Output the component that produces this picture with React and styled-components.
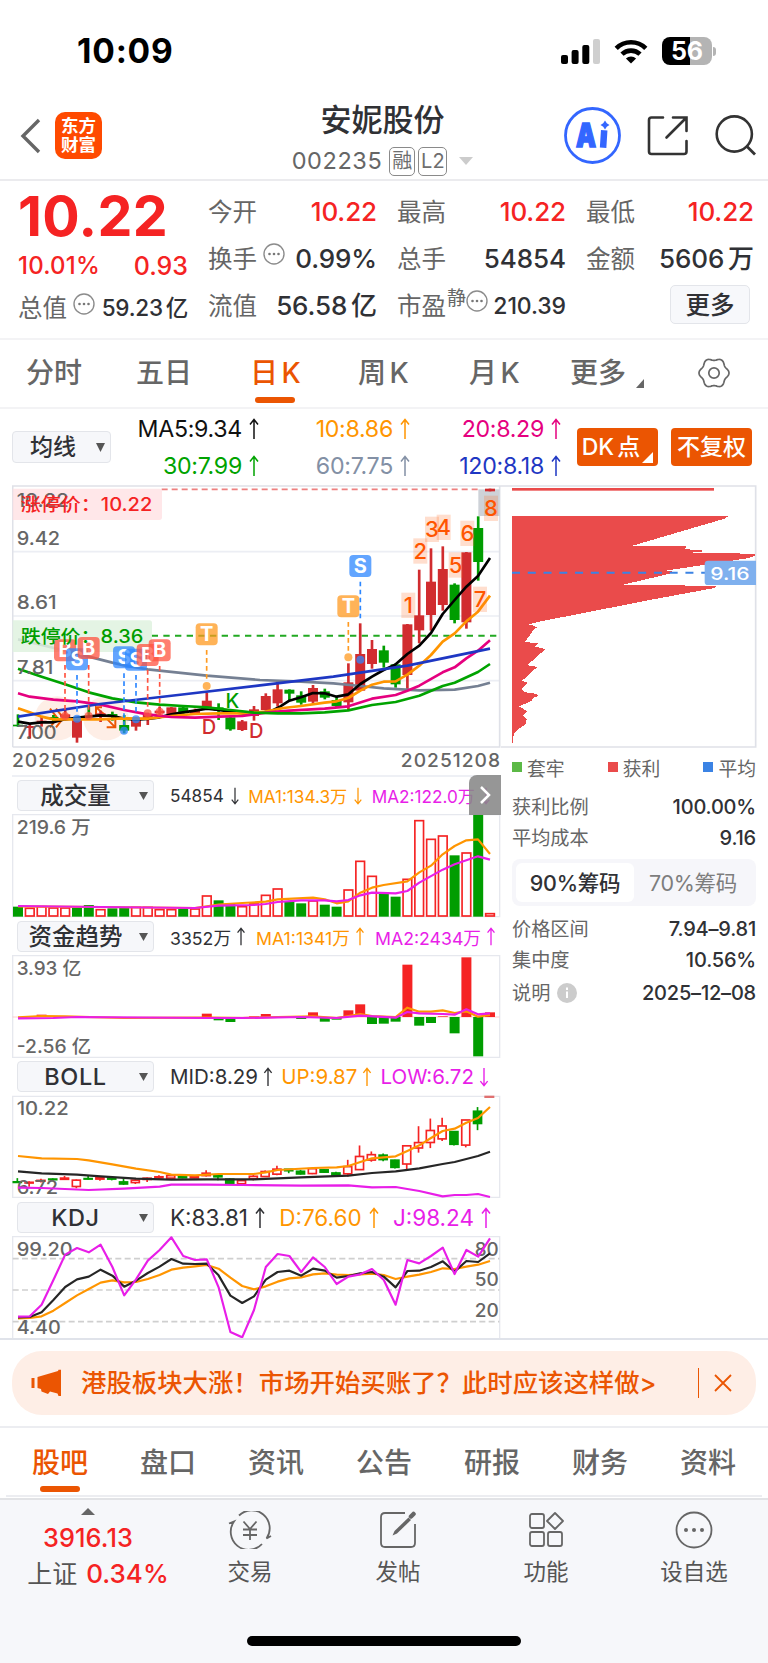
import styled, { createGlobalStyle } from "styled-components";

const GlobalStyle = createGlobalStyle`
  * {
    box-sizing: border-box;
  }

  body {
    margin: 0;
    background-color: white;
    font-family: Inter, "Noto Sans CJK SC", sans-serif;
    color: #303135;
  }

  svg {
    display: block;
    flex-shrink: 0;
  }
`;

const RED = "#f52323";
const GREEN = "#009d00";
const ORANGE = "#eb5502";
const AMBER = "#ff9500";
const PURPLE = "#e81ee8";
const GRAY = "#666";

const Page = styled.div`
  width: 768px;
  height: 1663px;
  overflow: hidden;
  display: flex;
  flex-direction: column;
  white-space: nowrap;
`;

const Text = styled.span`
  font-size: ${(p) => p.$size}px;
  line-height: ${(p) => p.$line || 30}px;
  font-weight: ${(p) => p.$weight || 400};
  letter-spacing: ${(p) => p.$space || 0}px;
  word-spacing: -3px;
  color: ${(p) => p.$color || "#303135"};
`;

/* ---------- status bar and header ---------- */

const StatusBar = styled.div`
  height: 92px;
  padding: 10px 52px 0 77px;
  display: flex;
  align-items: center;
  justify-content: space-between;
  flex-shrink: 0;
`;

const StatusIcons = styled.div`
  display: flex;
  align-items: center;
  gap: 14px;
`;

const BatteryWrap = styled.div`
  display: flex;
  align-items: center;
  gap: 1px;
`;

const Battery = styled.div`
  width: 50px;
  height: 28px;
  border-radius: 8px;
  background: linear-gradient(to right, black 56%, #b4b4b4 56%);
  color: white;
  font-size: 25px;
  line-height: 28px;
  font-weight: 700;
  text-align: center;
`;

const BatteryTip = styled.div`
  width: 3px;
  height: 9px;
  border-radius: 0 3px 3px 0;
  background-color: #b4b4b4;
`;

const Header = styled.header`
  height: 89px;
  display: grid;
  grid-template-columns: 1fr auto 1fr;
  border-bottom: 2px solid #ebebee;
  flex-shrink: 0;
`;

const HeaderLeft = styled.div`
  display: flex;
  align-items: center;
  gap: 14px;
  padding-left: 20px;
`;

const Logo = styled.div`
  width: 47px;
  height: 47px;
  border-radius: 10px;
  background-color: #ff4a00;
  color: white;
  font-size: 17.5px;
  line-height: 19px;
  font-weight: 700;
  padding-top: 4px;
  text-align: center;
`;

const TitleBlock = styled.div`
  display: flex;
  flex-direction: column;
  align-items: center;
  padding: 9px 3px 0 0;
`;

const CodeRow = styled.div`
  display: flex;
  align-items: center;
  height: 30px;
  margin-top: 7px;
`;

const CodeTag = styled.span`
  width: ${(p) => p.$width}px;
  height: 29px;
  border: 1.5px solid #8a8a8a;
  border-radius: 5px;
  color: #6e6e6e;
  font-size: 20px;
  line-height: 27px;
  text-align: center;
  margin-left: ${(p) => p.$gap}px;
`;

const HeaderRight = styled.div`
  display: flex;
  align-items: center;
  justify-content: flex-end;
  padding-right: 10px;
`;

/* ---------- quote numbers ---------- */

const Quote = styled.section`
  height: 159px;
  padding: 7px 14px 0 18px;
  display: grid;
  grid-template-columns: 170px 169px 169px 168px;
  column-gap: 20px;
  border-bottom: 2px solid #f3f3f5;
  flex-shrink: 0;
`;

const QuoteColumn = styled.div`
  display: flex;
  flex-direction: column;
`;

const QuoteRow = styled.div`
  height: ${(p) => p.$height || 47}px;
  display: flex;
  align-items: center;
  justify-content: space-between;
`;

const LabelGroup = styled.div`
  display: flex;
  align-items: center;
  gap: ${(p) => p.$gap || 6}px;
`;

const Raised = styled.div`
  display: flex;
  margin-top: -9px;
`;

const MoreButton = styled.button`
  width: 80px;
  height: 39px;
  margin: 3px 4px 0 auto;
  border: 1.5px solid #e3e5ea;
  border-radius: 5px;
  background-color: #f7f8fb;
  color: #303135;
  font: 500 24.5px/34px Inter, "Noto Sans CJK SC", sans-serif;
  padding: 0;
`;

/* ---------- period tabs ---------- */

const PeriodTabs = styled.nav`
  height: 69px;
  padding-left: 26px;
  display: flex;
  border-bottom: 2px solid #f3f3f5;
  flex-shrink: 0;
`;

const PeriodTab = styled.div`
  width: ${(p) => p.$width}px;
  padding-top: 13px;
  font-size: 28px;
  line-height: 40px;
  font-weight: 500;
  color: ${(p) => (p.$active ? ORANGE : GRAY)};
  word-spacing: -4px;
`;

const Underline = styled.div`
  width: 40px;
  height: 6px;
  margin: ${(p) => p.$margin};
  border-radius: 3px;
  background-color: ${ORANGE};
`;

const MoreTab = styled.div`
  display: flex;
  align-items: flex-end;
  gap: 10px;

  svg {
    margin-bottom: 5px;
  }
`;

const GearBox = styled.div`
  padding: 17px 0 0 19px;
`;

/* ---------- moving averages ---------- */

const AverageBar = styled.section`
  height: 76px;
  padding-left: 12px;
  display: flex;
  align-items: center;
  flex-shrink: 0;
`;

const SelectBox = styled.div`
  width: ${(p) => p.$width}px;
  height: ${(p) => p.$height || 31}px;
  flex-shrink: 0;
  display: flex;
  align-items: center;
  border: 1.5px solid #e3e5ea;
  border-radius: 4px;
  background-color: #f6f7fa;
  padding-right: 5px;
`;

const SelectName = styled.span`
  flex: 1;
  text-align: center;
  padding-right: ${(p) => p.$shift || 0}px;
  font-size: ${(p) => p.$size || 23}px;
  line-height: 28px;
  font-weight: 500;
  letter-spacing: ${(p) => p.$space || 0}px;
`;

const AverageGrid = styled.div`
  display: grid;
  grid-template-columns: 148px 151px 151px;
  grid-auto-rows: 37px;
  margin: 0 16px 0 0;
`;

const Average = styled.div`
  display: flex;
  align-items: center;
  justify-content: flex-end;
  gap: 7px;
  font-size: 23.2px;
  letter-spacing: -0.3px;
  color: ${(p) => p.$color};
`;

const OrangeButton = styled.div`
  width: 81px;
  height: 38px;
  margin-right: 13px;
  flex-shrink: 0;
  border-radius: 4px;
  background-color: ${ORANGE};
  color: white;
  font-size: 23px;
  font-weight: 500;
  line-height: 38px;
  word-spacing: -3px;
  display: flex;
  justify-content: center;
  gap: 2px;
`;

/* ---------- charts ---------- */

const Body = styled.main`
  height: 855px;
  padding-left: 12px;
  display: flex;
  border-bottom: 2px solid #e0e3ea;
  flex-shrink: 0;
`;

const ChartColumn = styled.div`
  width: 489px;
  flex-shrink: 0;
`;

const Dates = styled.div`
  height: 29px;
  display: flex;
  justify-content: space-between;
  border-bottom: 2px solid #eef0f5;
`;

const IndicatorBar = styled.div`
  position: relative;
  height: 37px;
  padding-left: 5px;
  display: flex;
  align-items: center;
`;

const Readings = styled.div`
  display: flex;
  flex: 1;
  justify-content: space-between;
  margin: 0 ${(p) => p.$right}px 0 16px;
`;

const Reading = styled.div`
  display: flex;
  align-items: center;
  gap: ${(p) => p.$gap}px;
  font-size: ${(p) => p.$size}px;
  color: ${(p) => p.$color};
`;

const NextTile = styled.div`
  position: absolute;
  right: 0;
  top: -2px;
  width: 32px;
  height: 40px;
  border-radius: 8px 0 0 0;
  background-color: rgba(135, 135, 135, 0.88);
  display: flex;
  align-items: center;
  justify-content: center;
`;

const SideColumn = styled.aside`
  width: 256px;
`;

const SideContent = styled.div`
  padding: 4px 1px 0 11px;
`;

const Legend = styled.div`
  height: 30px;
  display: flex;
  align-items: center;
  justify-content: space-between;
`;

const LegendItem = styled.div`
  display: flex;
  align-items: center;
  gap: 5px;
  font-size: 18.8px;
  color: ${GRAY};

  &::before {
    content: "";
    width: 10px;
    height: 10px;
    background-color: ${(p) => p.$color};
  }
`;

const SideRow = styled.div`
  height: ${(p) => p.$height}px;
  display: flex;
  align-items: center;
  justify-content: space-between;
`;

const Segment = styled.div`
  height: 47px;
  margin: 14px 0 7px;
  padding: 4px;
  display: flex;
  border-radius: 8px;
  background-color: #f6f6fa;
`;

const SegmentItem = styled.div`
  flex: 1;
  border-radius: 6px;
  background-color: ${(p) => (p.$active ? "white" : "transparent")};
  color: ${(p) => (p.$active ? "#303135" : "#7d7d7d")};
  font-size: 21.5px;
  letter-spacing: -0.3px;
  font-weight: ${(p) => (p.$active ? 500 : 400)};
  line-height: 40px;
  text-align: center;
`;

/* ---------- bottom ---------- */

const Banner = styled.div`
  height: 64px;
  margin: 11px 12px 11px;
  padding: 0 24px 0 19px;
  display: flex;
  align-items: center;
  border-radius: 30px;
  background-color: #feeee6;
  flex-shrink: 0;
`;

const BannerText = styled.div`
  flex: 1;
  margin-left: 18px;
  font-size: 25.4px;
  line-height: 40px;
  font-weight: 500;
  color: ${ORANGE};
`;

const BannerDivider = styled.div`
  width: 1.5px;
  height: 30px;
  margin-right: 15px;
  background-color: ${ORANGE};
`;

const SectionTabs = styled.nav`
  height: 69px;
  margin: 0 6px;
  display: flex;
  border-bottom: 2px solid #ecedf1;
  flex-shrink: 0;
`;

const SectionWrap = styled.div`
  border-top: 2px solid #ecedf1;
  flex-shrink: 0;
`;

const SectionTab = styled.div`
  width: 108px;
  padding-top: 15px;
  text-align: center;
  font-size: 28px;
  line-height: 40px;
  font-weight: 500;
  color: ${(p) => (p.$active ? ORANGE : GRAY)};
`;

const BottomBar = styled.footer`
  flex: 1;
  display: flex;
  flex-direction: column;
  justify-content: space-between;
  align-items: center;
  margin-top: 1px;
  border-top: 2px solid #e2e3e6;
  background-color: #f6f7fa;
`;

const BottomItems = styled.div`
  display: flex;
`;

const IndexItem = styled.div`
  width: 176px;
  padding-top: 8px;
  display: flex;
  flex-direction: column;
  align-items: center;
`;

const IndexChange = styled.div`
  display: flex;
  align-items: center;
  gap: 9px;
  padding-left: 20px;
`;

const BottomItem = styled.div`
  width: 148px;
  padding-top: 11px;
  display: flex;
  flex-direction: column;
  align-items: center;
  gap: 8px;
  font-size: 22.5px;
  line-height: 30px;
  color: #555;
`;

const HomeIndicator = styled.div`
  width: 274px;
  height: 10px;
  margin-bottom: 17px;
  border-radius: 5px;
  background-color: black;
`;

/* ---------- icons ---------- */

const Arrow = ({ down, size = 22 }) => (
  <svg width="10" height={size} viewBox="0 0 10 22" fill="none" stroke="currentColor" strokeWidth="1.5">
    <path d={down ? "M5 1V20.5M1 15.5L5 20.5L9 15.5" : "M5 21V1.5M1 6.5L5 1.5L9 6.5"} />
  </svg>
);

const Caret = ({ width = 9, height = 8, color = "#555", up }) => (
  <svg width={width} height={height} viewBox="0 0 10 10" preserveAspectRatio="none">
    <path d={up ? "M0 10L5 0L10 10Z" : "M0 0H10L5 10Z"} fill={color} />
  </svg>
);

const Corner = ({ color }) => (
  <svg width="8" height="9" viewBox="0 0 10 10" preserveAspectRatio="none">
    <path d="M10 0V10H0Z" fill={color} />
  </svg>
);

const Dots = () => (
  <svg width="22" height="22" viewBox="0 0 22 22">
    <circle cx="11" cy="11" r="10" fill="none" stroke="#8c8c8c" strokeWidth="1.4" />
    {[6.5, 11, 15.5].map((x) => (
      <circle key={x} cx={x} cy="11" r="1.3" fill="#777" />
    ))}
  </svg>
);

const gearPath =
  Array.from({ length: 121 }, (_, i) => {
    const a = (i / 120) * Math.PI * 2;
    const r = 13.8 + 1.2 * Math.cos(6 * a);
    return `${i ? "L" : "M"}${(16 + r * Math.cos(a)).toFixed(2)} ${(16 + r * Math.sin(a)).toFixed(2)}`;
  }).join("") + "Z";

const Gear = () => (
  <svg width="32" height="32" viewBox="0 0 32 32" fill="none" stroke="#666" strokeWidth="1.7" strokeLinejoin="round">
    <path d={gearPath} />
    <circle cx="16" cy="16" r="5.2" />
  </svg>
);

/* ---------- chart data ---------- */

// [rising, high, open/close top, open/close bottom, low]
const CANDLES = [
  [0, 703, 734, 739, 740], [1, 730, 738, 744, 776], [1, 708, 722, 728, 740], [0, 705, 711, 716, 724],
  [1, 685, 703, 713, 718], [1, 714, 720, 773, 788], [0, 680, 707, 711, 714], [1, 692, 700, 711, 726],
  [0, 695, 702, 711, 722], [0, 705, 735, 752, 760], [1, 712, 720, 740, 752], [1, 698, 704, 714, 735],
  [1, 680, 692, 700, 710], [1, 681, 682, 703, 704], [0, 675, 682, 700, 704], [1, 686, 690, 701, 704],
  [1, 638, 662, 682, 690], [0, 670, 682, 692, 720], [0, 706, 712, 748, 752], [1, 720, 724, 750, 753],
  [1, 678, 688, 708, 722], [1, 640, 648, 690, 691], [1, 600, 628, 670, 680], [0, 628, 629, 641, 662],
  [0, 634, 646, 668, 674], [1, 615, 624, 665, 670], [0, 626, 634, 653, 658], [0, 650, 660, 678, 682],
  [1, 550, 607, 667, 690], [1, 430, 522, 632, 633], [1, 480, 507, 552, 566], [0, 497, 511, 548, 563],
  [0, 550, 553, 613, 623], [1, 432, 433, 585, 628], [1, 269, 406, 451, 490], [1, 205, 305, 405, 452],
  [1, 199, 267, 375, 392], [0, 310, 314, 420, 430], [1, 216, 217, 427, 446], [0, 109, 144, 246, 302],
  [1, 26, 26, 34, 34],
];

const VOLUMES = [
  410, 413, 408, 412, 412, 413, 405, 417, 415, 413, 410, 410, 417, 417, 413, 415, 376, 391, 400, 408, 400,
  374, 355, 394, 400, 391, 404, 410, 358, 272, 317, 370, 380, 326, 150, 206, 196, 256, 247, 135, 429,
];
const FALLING_VOLUMES = [0, 5, 6, 8, 9, 14, 17, 18, 23, 24, 26, 27, 31, 32, 37, 39];

// height above the zero line, keyed by day
const FLOWS = {
  2: 7, 16: 10, 17: -10, 18: -15, 20: 2, 21: 9, 24: -6, 25: 14, 26: -14, 27: -8, 28: 20, 29: 38, 30: -21,
  31: -20, 32: -14, 33: 157, 34: -26, 35: -18, 36: 2, 37: -49, 38: 179, 39: -118, 40: 14,
};

const dayX = (i) => 54 + i * 35.4;
const daily = (values) => values.map((y, i) => `${dayX(i)},${y}`).join(" ");

const MA_LINES = [
  ["#758093", "54,478 125,495 195,512 266,530 337,548 372,556 443,568 620,587 780,600 903,605 1000,610 1081,618 1151,625 1258,631 1364,629 1434,618 1470,608"],
  ["#000", "54,725 89,731 125,727 160,727 195,718 240,712 302,706 337,708 372,716 408,719 443,717 479,712 514,703 549,697 585,692 620,686 656,690 691,695 727,700 762,700 810,695 840,680 868,662 903,652 939,639 974,640 1010,650 1045,643 1081,612 1116,590 1151,570 1187,553 1222,522 1258,497 1293,459 1328,402 1364,360 1399,320 1434,288 1470,234"],
  [AMBER, "54,685 89,697 125,710 160,718 230,718 300,718 372,715 443,716 514,708 585,702 656,700 727,700 797,695 850,684 903,678 974,668 1010,664 1045,654 1081,632 1116,614 1151,605 1187,604 1222,584 1258,557 1293,525 1328,485 1364,460 1399,424 1434,395 1470,347"],
  ["#e5007f", "54,640 89,650 160,659 231,664 302,674 372,690 443,703 514,711 585,713 656,710 727,708 797,698 868,692 974,686 1045,679 1116,656 1187,645 1222,632 1258,617 1328,577 1364,562 1399,535 1434,512 1470,481"],
  ["#00a300", "54,566 125,590 195,613 266,637 337,655 408,667 479,674 549,678 620,682 691,690 762,698 833,700 903,700 974,697 1045,691 1116,675 1187,666 1258,647 1328,618 1364,608 1434,576 1470,552"],
  ["#1e37c3", "54,710 300,672 560,642 780,616 1000,590 1222,557 1470,506"],
];

// [letter, x, badge y, dashed line start, dashed line end, dot y, colour]
const BADGES = [
  ["B", 195, 511, 555, 690, 708, "#ff5340"],
  ["S", 231, 538, 585, 700, 716, "#2d87ff"],
  ["B", 266, 504, 555, 690, 708, "#ff5340"],
  ["S", 372, 532, 580, 735, 752, "#2d87ff"],
  ["S", 408, 539, 585, 700, 718, "#2d87ff"],
  ["B", 443, 525, 570, 685, 700, "#ff5340"],
  ["B", 479, 511, 558, 680, 695, "#ff5340"],
  ["T", 620, 463, 510, 605, 618, "#ff9a20"],
  ["T", 1045, 379, 426, 520, 532, "#ff9a20"],
  ["S", 1081, 258, 305, 415, 539, "#2d87ff"],
];

const COUNTS = [
  [1, 1225, 376], [2, 1261, 213], [3, 1296, 148], [4, 1331, 142],
  [5, 1367, 255], [6, 1402, 160], [7, 1440, 358], [8, 1473, 85],
];

const CHIP_EDGE = [
  [109, 686], [117, 672], [198, 396], [200, 558], [206, 556], [207, 535], [211, 606], [217, 604], [218, 580],
  [222, 766], [229, 764], [236, 738], [272, 500], [277, 528], [315, 368], [318, 648], [324, 646], [360, 452],
  [427, 110], [434, 88], [437, 100], [444, 114], [447, 102], [487, 75], [490, 116], [500, 106], [508, 136],
  [556, 82], [561, 112], [603, 66], [608, 82], [615, 78], [627, 64], [637, 74], [642, 108], [648, 116],
  [655, 98], [662, 95], [680, 58], [690, 75], [696, 82], [706, 68], [718, 80], [735, 76], [745, 58], [760, 42],
  [792, 37],
];

const chipWidth = (y) => {
  const n = CHIP_EDGE.findIndex((p) => p[0] > y);
  if (n < 1) return 1;
  const [y0, x0] = CHIP_EDGE[n - 1];
  const [y1, x1] = CHIP_EDGE[n];
  return x0 + ((x1 - x0) * (y - y0)) / (y1 - y0) - 36;
};

/* ---------- charts ---------- */

const Label = ({ x, y, w, children, size = 55, color = "#666", weight = 500 }) => (
  <text x={x} y={y} textLength={w} lengthAdjust="spacingAndGlyphs" fontSize={size} fontWeight={weight} fill={color}>
    {children}
  </text>
);

const PriceChart = () => (
  <svg width="489" height="263" viewBox="36 15 1467 789">
    <g stroke="#eceef4" strokeWidth="5">
      <path d="M38 215H1498M38 408H1498M38 602H1498" />
    </g>
    <path d="M38 801V18H1503M1499 18V801H38" fill="none" stroke="#dfe1e8" strokeWidth="5" />
    <rect x="1435" y="28" width="64" height="80" fill="#ced2d8" />
    <g fill="#feeae0" fillOpacity="0.8">
      <ellipse cx="172" cy="715" rx="68" ry="66" />
      <ellipse cx="318" cy="715" rx="68" ry="66" />
    </g>
    <g fill="none" stroke={ORANGE} strokeWidth="6">
      <path d="M150 686L172 714L150 742M168 686L190 714L168 742" />
      <path d="M288 706V682L316 706M288 682H306M320 742H346V718M346 742L320 716" />
    </g>
    <path d="M485 28H1435" stroke="#ee8080" strokeWidth="5" strokeDasharray="18 12" />
    <path d="M455 467H1498" stroke="#22a922" strokeWidth="6" strokeDasharray="19 16" />
    {CANDLES.map(([up, high, top, bottom, low], i) => (
      <g key={i} fill={up ? "#d12c2f" : GREEN}>
        <rect x={dayX(i) - 4} y={high} width="8" height={low - high} />
        <rect x={dayX(i) - 15} y={top} width="30" height={bottom - top} />
      </g>
    ))}
    {MA_LINES.map(([color, points]) => (
      <polyline key={color} points={points} fill="none" stroke={color} strokeWidth="8" strokeLinejoin="round" />
    ))}
    <path d="M38 26H478Q486 26 486 34V112Q486 120 478 120H38Z" fill="#ffdfe1" fillOpacity="0.75" />
    <path d="M38 421H448Q456 421 456 429V508Q456 516 448 516H38Z" fill="#dff2df" fillOpacity="0.85" />
    {BADGES.map(([letter, x, y, from, to, dot, color]) => (
      <g key={x}>
        <path d={`M${x} ${from}V${to}`} stroke={color} strokeWidth="5" strokeDasharray="14 10" />
        <circle cx={x} cy={dot} r="12" fill={color} fillOpacity="0.75" />
        <rect x={x - 33} y={y - 33} width="66" height="66" rx="12" fill={color} fillOpacity="0.75" />
        <text x={x} y={y + 21} textAnchor="middle" fontSize="60" fontWeight="700" fill="white">{letter}</text>
      </g>
    ))}
    <Label x="50" y="82" w="156">10.22</Label>
    <Label x="50" y="194" w="130">9.42</Label>
    <Label x="50" y="388" w="120">8.61</Label>
    <Label x="50" y="583" w="110">7.81</Label>
    <Label x="50" y="778" w="120">7.00</Label>
    <Label x="62" y="94" w="395" color={RED}>涨停价：10.22</Label>
    <Label x="62" y="488" w="368" color={GREEN}>跌停价：8.36</Label>
    {COUNTS.map(([n, x, y]) => (
      <g key={n}>
        <rect x={x - 21} y={y - 38} width="42" height="76" fill="#ff6a20" fillOpacity="0.22" />
        <text x={x} y={y + 23} textAnchor="middle" fontSize="66" fontWeight="500" fill="#ff5500">{n}</text>
      </g>
    ))}
    <g fontSize="60" fontWeight="500" textAnchor="middle">
      <text x="697" y="685" fill={GREEN}>K</text>
      <text x="627" y="762" fill="#d12c2f">D</text>
      <text x="769" y="773" fill="#d12c2f">D</text>
    </g>
  </svg>
);

const VolumeChart = () => (
  <svg width="489" height="104" viewBox="36 132 1467 312">
    <path d="M38 440V134H1499V440Z" fill="none" stroke="#e6e8ee" strokeWidth="4" />
    <Label x="50" y="193" w="222">219.6 万</Label>
    {VOLUMES.map((y, i) =>
      FALLING_VOLUMES.includes(i) ? (
        <rect key={i} x={dayX(i) - 15} y={y} width="30" height={440 - y} fill={GREEN} />
      ) : (
        <rect key={i} x={dayX(i) - 13} y={y + 2} width="26" height={436 - y} fill="white" stroke={RED} strokeWidth="5" />
      )
    )}
    <g fill="none" strokeWidth="6.5" strokeLinejoin="round">
      <polyline stroke={AMBER} points="54,409 302,411 585,414 656,404 727,399 797,395 833,388 939,383 974,388 1010,400 1045,394 1081,368 1116,353 1151,345 1222,334 1258,307 1293,287 1328,253 1364,228 1399,211 1434,208 1470,252" />
      <polyline stroke={PURPLE} points="54,408 302,411 585,414 656,407 762,405 797,402 833,396 903,391 974,391 1010,394 1045,390 1081,376 1116,368 1187,370 1222,363 1258,338 1328,299 1364,283 1434,259 1470,269" />
    </g>
  </svg>
);

const FlowChart = () => (
  <svg width="489" height="103" viewBox="36 555 1467 309">
    <path d="M38 862V557H1499V862Z" fill="none" stroke="#e6e8ee" strokeWidth="4" />
    <Label x="50" y="614" w="194">3.93 亿</Label>
    <Label x="50" y="848" w="223">-2.56 亿</Label>
    <path d="M38 741H1498" stroke="#ffb7b7" strokeWidth="2" />
    {Object.entries(FLOWS).map(([i, v]) => (
      <rect key={i} x={dayX(i) - 15} y={v > 0 ? 741 - v : 741} width="30" height={Math.abs(v)} fill={v > 0 ? RED : GREEN} />
    ))}
    <g fill="none" strokeWidth="6.5" strokeLinejoin="round">
      <polyline stroke={AMBER} points="54,742 125,738 195,739 372,744 620,743 727,744 833,741 939,739 1010,744 1081,732 1116,738 1187,741 1222,713 1258,725 1293,725 1328,721 1364,729 1399,724 1434,740 1470,735" />
      <polyline stroke={PURPLE} points="54,745 160,744 231,741 620,744 727,744 903,741 1010,744 1081,737 1187,743 1222,726 1258,730 1328,732 1364,734 1399,718 1434,733 1470,730" />
    </g>
  </svg>
);

const bollY = (y) => 110 + (y - 22) * 0.3588;

const BollChart = () => (
  <svg width="489" height="104" viewBox="36 105 1467 312">
    <path d="M38 412V109H1499V412Z" fill="none" stroke="#e6e8ee" strokeWidth="4" />
    {CANDLES.slice(0, 40).map(([up, high, top, bottom, low], i) => (
      <g key={i} stroke={up ? RED : GREEN} strokeWidth="5">
        <path d={`M${dayX(i) - 2} ${bollY(high)}V${bollY(low)}`} />
        <rect
          x={dayX(i) - 14}
          y={bollY(top)}
          width="24"
          height={Math.max(1, bollY(bottom) - bollY(top))}
          fill={up ? "white" : GREEN}
        />
      </g>
    ))}
    <rect x="1453" y="107" width="30" height="7" fill="#e07070" />
    <Label x="50" y="166" w="156">10.22</Label>
    <Label x="50" y="401" w="124">6.72</Label>
    <g fill="none" strokeWidth="6.5" strokeLinejoin="round">
      <polyline stroke={AMBER} points="54,288 125,295 231,297 266,301 337,313 408,326 479,336 514,344 585,346 656,342 762,342 797,337 833,330 939,324 1010,322 1045,318 1081,306 1116,295 1187,289 1222,273 1258,256 1293,234 1328,213 1364,206 1399,188 1434,174 1470,141" />
      <polyline stroke="#262626" points="54,334 125,340 231,344 302,349 408,356 514,359 620,358 762,358 903,352 1045,347 1116,339 1187,334 1258,325 1328,312 1364,306 1434,288 1470,275" />
      <polyline stroke={PURPLE} points="54,383 125,384 195,387 266,390 372,386 479,380 514,374 620,374 727,375 903,377 1045,376 1116,382 1187,381 1222,387 1258,393 1328,409 1364,405 1399,405 1434,402 1470,411" />
    </g>
  </svg>
);

const K_LINE = [
  772, 771, 757, 720, 681, 658, 650, 629, 647, 680, 662, 639, 620, 597, 611, 612, 611, 646, 707, 729, 709,
  659, 636, 632, 647, 626, 632, 653, 648, 640, 636, 650, 682, 633, 632, 621, 604, 635, 603, 606, 580,
];
const D_LINE = [
  775, 774, 769, 752, 729, 706, 687, 668, 661, 667, 666, 657, 645, 629, 623, 619, 615, 626, 653, 678, 688,
  679, 665, 655, 652, 643, 640, 644, 645, 643, 641, 645, 657, 650, 644, 636, 625, 627, 620, 614, 603,
];
const J_LINE = [
  770, 769, 734, 660, 584, 564, 577, 554, 621, 706, 658, 602, 570, 532, 588, 600, 598, 682, 816, 832, 750,
  621, 582, 588, 636, 592, 621, 672, 650, 643, 627, 660, 734, 600, 610, 588, 563, 642, 570, 590, 535,
];

const KdjChart = () => (
  <svg width="489" height="102" viewBox="36 528 1467 306">
    <path d="M38 834V530H1499V834" fill="none" stroke="#e6e8ee" strokeWidth="4" />
    <path d="M38 596H1498M38 690H1498M38 785H1498" stroke="#cfcfcf" strokeWidth="5" strokeDasharray="18 10" />
    <Label x="50" y="588" w="168">99.20</Label>
    <Label x="50" y="823" w="132">4.40</Label>
    <Label x="1424" y="588" w="72">80</Label>
    <Label x="1424" y="678" w="72">50</Label>
    <Label x="1424" y="772" w="72">20</Label>
    <g fill="none" strokeWidth="6.5" strokeLinejoin="round">
      <polyline stroke={AMBER} points={daily(D_LINE)} />
      <polyline stroke="#262626" points={daily(K_LINE)} />
      <polyline stroke={PURPLE} points={daily(J_LINE)} />
    </g>
  </svg>
);

const ChipChart = () => (
  <svg width="256" height="263" viewBox="3 15 768 789">
    <path d="M0 18H767V801H0" fill="none" stroke="#dfe1e8" strokeWidth="5" />
    <rect x="36" y="24" width="606" height="8" fill="#ea4b4b" />
    <g fill="#ea4b4b" shapeRendering="crispEdges">
      {Array.from({ length: 228 }, (_, i) => {
        const y = 109 + i * 3;
        return <rect key={i} x="36" y={y} width={Math.max(1, chipWidth(y + 1))} height="3.2" />;
      })}
    </g>
    <path d="M36 278H618" stroke="#3b83e4" strokeWidth="6" strokeDasharray="24 23.3" />
    <path d="M624 242H768V315H624Q614 315 614 305V252Q614 242 624 242Z" fill="#7fb0ee" />
    <Label x="631" y="299" w="118" color="white" size="52">9.16</Label>
  </svg>
);

const Stat = ({ label, value, color, dots }) => (
  <QuoteRow>
    <LabelGroup>
      <Text $size={24.5} $color={GRAY}>{label}</Text>
      {dots && <Raised><Dots /></Raised>}
    </LabelGroup>
    <Text $size={26} $weight={500} $color={color} $space={-0.1}>{value}</Text>
  </QuoteRow>
);

const SideStat = ({ label, value, height, icon }) => (
  <SideRow $height={height}>
    <LabelGroup $gap={7}>
      <Text $size={19.2} $color={GRAY}>{label}</Text>
      {icon}
    </LabelGroup>
    <Text $size={20} $weight={500} $space={-0.2}>{value}</Text>
  </SideRow>
);

const Indicator = ({ name, size, nameSpace, right, readings, arrow, gap = 5, next }) => (
  <IndicatorBar>
    <SelectBox $width={137}>
      <SelectName $size={23.5} $space={nameSpace} $shift={6}>{name}</SelectName>
      <Caret />
    </SelectBox>
    <Readings $right={right}>
      {readings.map(([text, color, down]) => (
        <Reading key={text} $size={size} $gap={gap} $color={color}>
          {text}
          <Arrow down={down} size={arrow} />
        </Reading>
      ))}
    </Readings>
    {next && (
      <NextTile>
        <svg width="12" height="20" viewBox="0 0 12 20" fill="none" stroke="white" strokeWidth="2.5">
          <path d="M2 2L10 10L2 18" />
        </svg>
      </NextTile>
    )}
  </IndicatorBar>
);

const AVERAGES = [
  ["MA5:9.34", "#111"],
  ["10:8.86", AMBER],
  ["20:8.29", "#e5007f"],
  ["30:7.99", "#00a300"],
  ["60:7.75", "#8390a5"],
  ["120:8.18", "#1e37c3"],
];

const SECTIONS = ["股吧", "盘口", "资讯", "公告", "研报", "财务", "资料"];

const App = () => {
  return (
    <>
      <GlobalStyle />
      <Page>
        <StatusBar>
          <Text $size={33.5} $line={36} $weight={700} $color="black" $space={0.8}>10:09</Text>
          <StatusIcons>
            <svg width="39" height="25" viewBox="0 0 39 25">
              <rect x="0" y="16" width="7" height="9" rx="2" />
              <rect x="10.6" y="11" width="7" height="14" rx="2" />
              <rect x="21.3" y="6" width="7" height="19" rx="2" />
              <rect x="32" y="0" width="7" height="25" rx="2" fill="#cfcfcf" />
            </svg>
            <svg width="34" height="25" viewBox="0 0 34 25" fill="none" stroke="black" strokeWidth="4.6">
              <path d="M2.2 9.4A21 21 0 0 1 31.8 9.4" />
              <path d="M8 15.2A13 13 0 0 1 26 15.2" />
              <path d="M17 24.6L11.9 19.5A7.3 7.3 0 0 1 22.1 19.5Z" fill="black" stroke="none" />
            </svg>
            <BatteryWrap>
              <Battery>56</Battery>
              <BatteryTip />
            </BatteryWrap>
          </StatusIcons>
        </StatusBar>

        <Header>
          <HeaderLeft>
            <svg width="21" height="36" viewBox="0 0 21 36" fill="none" stroke="#666" strokeWidth="3.4">
              <path d="M19 2L3 18L19 34" />
            </svg>
            <Logo>
              东方
              <br />
              财富
            </Logo>
          </HeaderLeft>
          <TitleBlock>
            <Text $size={31} $line={38} $weight={500}>安妮股份</Text>
            <CodeRow>
              <Text $size={23.5} $color={GRAY} $space={0.6}>002235</Text>
              <CodeTag $width={26} $gap={7}>融</CodeTag>
              <CodeTag $width={29} $gap={3}>L2</CodeTag>
              <svg width="26" height="8" viewBox="0 0 26 8">
                <path d="M12 0H26L19 8Z" fill="#ccc" />
              </svg>
            </CodeRow>
          </TitleBlock>
          <HeaderRight>
            <svg width="57" height="57" viewBox="0 0 57 57">
              <circle cx="28.5" cy="28.5" r="27" fill="white" stroke="#3366ff" strokeWidth="2.8" />
              <text
                x="12"
                y="39.5"
                fontSize="33"
                fontWeight="900"
                fill="#3366ff"
                stroke="#3366ff"
                strokeWidth="1.6"
                textLength="20"
                lengthAdjust="spacingAndGlyphs"
              >
                A
              </text>
              <path d="M40 26.5L39.3 37.5" stroke="#3366ff" strokeWidth="6.5" strokeLinecap="square" />
              <path d="M41 13.5L42.8 16.2L45.5 18L42.8 19.8L41 22.5L39.2 19.8L36.5 18L39.2 16.2Z" fill="#3366ff" />
            </svg>
            <svg width="67" height="44" viewBox="0 0 67 44" fill="none" stroke="#333" strokeWidth="2.6" strokeLinecap="round">
              <path d="M42 3.5H30.5Q28 3.5 28 6V37.5Q28 40 30.5 40H63Q65.5 40 65.5 37.5V27" />
              <path d="M52 3.5H65.5V17M65 4L45.5 23.5" />
            </svg>
            <svg width="70" height="44" viewBox="0 0 70 44" fill="none" stroke="#333" strokeWidth="2.6">
              <circle cx="46.3" cy="20" r="17.6" />
              <path d="M59 32.5L67 40.5" strokeWidth="2.8" />
            </svg>
          </HeaderRight>
        </Header>

        <Quote>
          <QuoteColumn>
            <QuoteRow $height={55}>
              <Text $size={55.5} $line={54} $weight={700} $color={RED} $space={0.4}>10.22</Text>
            </QuoteRow>
            <QuoteRow $height={46}>
              <Text $size={24} $color={RED} $weight={500} $space={0.2}>10.01%</Text>
              <Text $size={25} $color={RED} $weight={500}>0.93</Text>
            </QuoteRow>
            <QuoteRow $height={38}>
              <LabelGroup>
                <Text $size={24.5} $color={GRAY}>总值</Text>
                <Raised><Dots /></Raised>
              </LabelGroup>
              <Text $size={22.5} $line={36} $weight={500} $space={-0.2}>59.23 亿</Text>
            </QuoteRow>
          </QuoteColumn>
          <QuoteColumn>
            <Stat label="今开" value="10.22" color={RED} />
            <Stat label="换手" value="0.99%" dots />
            <Stat label="流值" value="56.58 亿" />
          </QuoteColumn>
          <QuoteColumn>
            <Stat label="最高" value="10.22" color={RED} />
            <Stat label="总手" value="54854" />
            <QuoteRow>
              <LabelGroup $gap={1}>
                <Text $size={24.5} $color={GRAY}>市盈</Text>
                <Raised>
                  <Text $size={19} $line={18} $color={GRAY}>静</Text>
                  <Dots />
                </Raised>
              </LabelGroup>
              <Text $size={23} $line={40} $weight={500} $space={-0.1}>210.39</Text>
            </QuoteRow>
          </QuoteColumn>
          <QuoteColumn>
            <Stat label="最低" value="10.22" color={RED} />
            <Stat label="金额" value="5606 万" />
            <MoreButton>更多</MoreButton>
          </QuoteColumn>
        </Quote>

        <PeriodTabs>
          <PeriodTab $width={110}>分时</PeriodTab>
          <PeriodTab $width={114}>五日</PeriodTab>
          <PeriodTab $width={108} $active>
            日 K
            <Underline $margin="4px 0 0 5px" />
          </PeriodTab>
          <PeriodTab $width={111}>周 K</PeriodTab>
          <PeriodTab $width={101}>月 K</PeriodTab>
          <PeriodTab $width={109}>
            <MoreTab>
              更多
              <Corner color={GRAY} />
            </MoreTab>
          </PeriodTab>
          <GearBox>
            <Gear />
          </GearBox>
        </PeriodTabs>

        <AverageBar>
          <SelectBox $width={99} $height={32}>
            <SelectName $shift={3}>均线</SelectName>
            <Caret height={9} />
          </SelectBox>
          <AverageGrid>
            {AVERAGES.map(([text, color]) => (
              <Average key={text} $color={color}>
                {text}
                <Arrow />
              </Average>
            ))}
          </AverageGrid>
          <OrangeButton>
            DK 点
            <svg width="11" height="38" viewBox="0 0 11 38">
              <path d="M11 24V35H0Z" fill="white" />
            </svg>
          </OrangeButton>
          <OrangeButton>不复权</OrangeButton>
        </AverageBar>

        <Body>
          <ChartColumn>
            <PriceChart />
            <Dates>
              <Text $size={19.2} $line={25} $weight={500} $color={GRAY} $space={1}>20250926</Text>
              <Text $size={19.2} $line={25} $weight={500} $color={GRAY} $space={1}>20251208</Text>
            </Dates>
            <Indicator
              name="成交量"
              size={17.2}
              arrow={18}
              gap={6}
              right={10}
              readings={[["54854", "#303135", true], ["MA1:134.3万", AMBER, true], ["MA2:122.0万", PURPLE, true]]}
              next
            />
            <VolumeChart />
            <Indicator
              name="资金趋势"
              size={17.7}
              arrow={19}
              right={5}
              readings={[["3352万", "#303135"], ["MA1:1341万", AMBER], ["MA2:2434万", PURPLE]]}
            />
            <FlowChart />
            <Indicator
              name="BOLL"
              nameSpace={0.6}
              size={20.5}
              arrow={20}
              right={12}
              readings={[["MID:8.29", "#303135"], ["UP:9.87", AMBER], ["LOW:6.72", PURPLE, true]]}
            />
            <BollChart />
            <Indicator
              name="KDJ"
              nameSpace={0.6}
              size={22.5}
              arrow={22}
              gap={7}
              right={10}
              readings={[["K:83.81", "#303135"], ["D:76.60", AMBER], ["J:98.24", PURPLE]]}
            />
            <KdjChart />
          </ChartColumn>

          <SideColumn>
            <ChipChart />
            <SideContent>
              <Legend>
                <LegendItem $color="#5cb946">套牢</LegendItem>
                <LegendItem $color="#ea4b4b">获利</LegendItem>
                <LegendItem $color="#3b83e4">平均</LegendItem>
              </Legend>
              <SideStat height={49} label="获利比例" value="100.00%" />
              <SideStat height={14} label="平均成本" value="9.16" />
              <Segment>
                <SegmentItem $active>90%筹码</SegmentItem>
                <SegmentItem>70%筹码</SegmentItem>
              </Segment>
              <SideStat height={31} label="价格区间" value="7.94–9.81" />
              <SideStat height={31} label="集中度" value="10.56%" />
              <SideStat
                height={35}
                label="说明"
                value="2025–12–08"
                icon={
                  <svg width="20" height="20" viewBox="0 0 20 20">
                    <circle cx="10" cy="10" r="10" fill="#ccc" />
                    <path d="M10 8.5V15M10 4.5V7" stroke="white" strokeWidth="2" />
                  </svg>
                }
              />
            </SideContent>
          </SideColumn>
        </Body>

        <Banner>
          <svg width="32" height="28" viewBox="0 0 32 28" fill={ORANGE}>
            <rect x="0.5" y="9" width="3" height="10" />
            <path d="M6.5 8L27 2L27.5 0.8H30V27H27.5L26.5 24.5L19 22.5L17 25L10.5 22.5L10 20L6.5 19Z" />
          </svg>
          <BannerText>港股板块大涨！市场开始买账了？此时应该这样做&gt;</BannerText>
          <BannerDivider />
          <svg width="18" height="18" viewBox="0 0 18 18" stroke={ORANGE} strokeWidth="1.8">
            <path d="M1 1L17 17M17 1L1 17" />
          </svg>
        </Banner>

        <SectionWrap>
          <SectionTabs>
            {SECTIONS.map((name, i) => (
              <SectionTab key={name} $active={i === 0}>
                {name}
                {i === 0 && <Underline $margin="3px auto 0" />}
              </SectionTab>
            ))}
          </SectionTabs>
        </SectionWrap>

        <BottomBar>
          <BottomItems>
            <IndexItem>
              <Caret up width={14} height={7} color={GRAY} />
              <Text $size={25.3} $line={46} $weight={500} $color={RED} $space={0.1}>3916.13</Text>
              <IndexChange>
                <Text $size={25} $line={26} $color="#555">上证</Text>
                <Text $size={26} $line={26} $color={RED} $weight={500}>0.34%</Text>
              </IndexChange>
            </IndexItem>
            <BottomItem>
              <svg width="44" height="38" viewBox="0 0 44 38" fill="none" stroke="#666" strokeWidth="1.8">
                <path d="M11 4.5A18 18 0 0 1 38.5 27.5L43 25" />
                <path d="M34 33A18 18 0 0 1 6 10.5L1 12.5" />
                <path d="M15.5 10.5L22 18L28.5 10.5M22 18V29M15 18.5H29M15 24H29" />
              </svg>
              交易
            </BottomItem>
            <BottomItem>
              <svg width="38" height="38" viewBox="0 0 38 38" fill="none" stroke="#666" strokeWidth="1.8">
                <path d="M26 2H6Q2 2 2 6V32Q2 36 6 36H32Q36 36 36 32V13" />
                <path d="M13.5 24.5L15.5 20L29.5 6.5L32 9L18 22.5Z" fill="#666" stroke="none" />
                <path d="M32 5.5L34.5 3" strokeWidth="4.5" strokeLinecap="round" />
              </svg>
              发帖
            </BottomItem>
            <BottomItem>
              <svg width="36" height="38" viewBox="0 0 36 38" fill="none" stroke="#666" strokeWidth="1.8">
                <rect x="2" y="3" width="14" height="14" rx="2" />
                <rect x="2" y="21" width="14" height="14" rx="2" />
                <rect x="20" y="21" width="14" height="14" rx="2" />
                <path d="M27 2L35 10L27 18L19 10Z" strokeLinejoin="round" />
              </svg>
              功能
            </BottomItem>
            <BottomItem>
              <svg width="38" height="38" viewBox="0 0 38 38">
                <circle cx="19" cy="19" r="17.5" fill="none" stroke="#666" strokeWidth="1.8" />
                {[11, 19, 27].map((x) => (
                  <circle key={x} cx={x} cy="19" r="2" fill="#666" />
                ))}
              </svg>
              设自选
            </BottomItem>
          </BottomItems>
          <HomeIndicator />
        </BottomBar>
      </Page>
    </>
  );
};

export default App;
